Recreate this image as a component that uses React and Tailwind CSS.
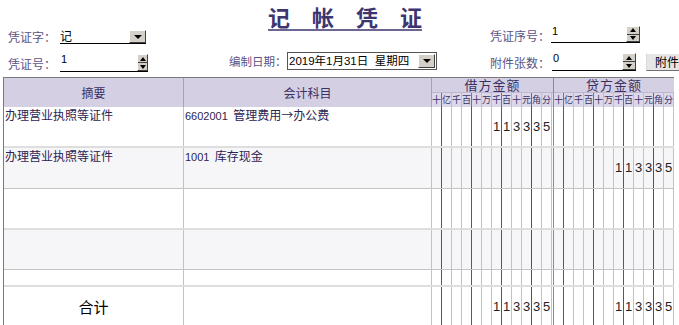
import React from 'react';

const UNITS = ['十', '亿', '千', '百', '十', '万', '千', '百', '十', '元', '角', '分'];

// colour of the line to the right of column i
const lineClass = (i) => {
  if (i === 0 || i === 3 || i === 6) return 'border-r-[#138a13]';
  if (i === 9) return 'border-r-[#f01010]';
  return 'border-r-[#c2c2c2]';
};

const headLineClass = (i) => {
  if (i === 0 || i === 3 || i === 6) return 'border-r-[#2f9a6a]';
  if (i === 9) return 'border-r-[#d04040]';
  return 'border-r-[#a9c3e0]';
};

const DownBtn = ({ className = '' }) => (
  <div
    className={`flex items-center justify-center bg-[#d4d0c8] border border-t-white border-l-white border-r-[#404040] border-b-[#404040] ${className}`}
  >
    <div className="w-0 h-0 border-l-[4px] border-r-[4px] border-t-[4px] border-l-transparent border-r-transparent border-t-black" />
  </div>
);

const Spinner = ({ className = '' }) => (
  <div
    className={`flex flex-col bg-[#d4d0c8] border border-t-white border-l-white border-r-[#404040] border-b-[#404040] ${className}`}
  >
    <div className="flex-1 flex items-center justify-center border-b border-[#404040]">
      <div className="w-0 h-0 border-l-[3px] border-r-[3px] border-b-[4px] border-l-transparent border-r-transparent border-b-black" />
    </div>
    <div className="flex-1 flex items-center justify-center">
      <div className="w-0 h-0 border-l-[3px] border-r-[3px] border-t-[4px] border-l-transparent border-r-transparent border-t-black" />
    </div>
  </div>
);

const Amount = ({ value = '' }) => {
  const cells = UNITS.map((_, i) => {
    const idx = i - (12 - value.length);
    return idx >= 0 ? value[idx] : '';
  });
  return (
    <div className="flex h-full">
      {cells.map((d, i) => (
        <div
          key={i}
          className={`w-[10px] h-full border-r flex items-center justify-center font-['Liberation_Sans',sans-serif] text-[13px] text-[#222] ${lineClass(i)}`}
        >
          {d}
        </div>
      ))}
    </div>
  );
};

const Row = ({ className, summary, subject, debit, credit, total }) => (
  <div className={`flex ${className}`}>
    <div
      className={`w-[180px] border-r border-[#c2c2c2] ${
        total
          ? 'flex items-center justify-center text-[15px] text-black'
          : 'pl-[1px] pt-[1px] text-[12px] leading-[14px] text-[#2b2452]'
      }`}
    >
      {summary}
    </div>
    <div className="w-[248px] border-r border-[#c2c2c2] pl-[1px] pt-[1px] text-[12px] leading-[14px] text-[#2b2452]">
      {subject}
    </div>
    <div className="w-[122px] border-r border-[#8c8c8c]">
      <Amount value={debit} />
    </div>
    <div className="w-[120px]">
      <Amount value={credit} />
    </div>
  </div>
);

export default function App() {
  return (
    <div className="w-[679px] h-[325px] overflow-hidden bg-white font-['Noto_Sans_CJK_SC',sans-serif] text-[12px]">
      {/* header form */}
      <div className="flex h-[77px]">
        {/* left column */}
        <div className="w-[229px] shrink-0 pl-[8px] pt-[29px]">
          <div className="flex items-center h-[15px]">
            <span className="w-[52px] shrink-0 whitespace-nowrap text-[#5b5385] leading-[15px]">凭证字：</span>
            <div className="w-[86px] h-[15px] shrink-0 border-b border-black flex justify-between">
              <span className="leading-[13px] text-black">记</span>
              <DownBtn className="w-[17px] h-[13px] self-end" />
            </div>
          </div>
          <div className="flex items-center h-[18px] mt-[10px]">
            <span className="w-[52px] shrink-0 whitespace-nowrap text-[#5b5385] leading-[15px]">凭证号：</span>
            <div className="w-[88px] h-[18px] shrink-0 border-b border-black flex justify-between">
              <span className="font-['Liberation_Sans',sans-serif] text-[11px] leading-[11px] text-black pl-[1px]">1</span>
              <Spinner className="w-[11px] h-[17px]" />
            </div>
          </div>
        </div>

        {/* center column */}
        <div className="w-[261px] shrink-0">
          <div className="h-[52px] pl-[39px] pt-[4px]">
            <div className="inline-flex gap-[22px] border-b-2 border-[#6e6692] text-[22px] leading-[25px] font-semibold text-[#3e3470]">
              <span>记</span>
              <span>帐</span>
              <span>凭</span>
              <span>证</span>
            </div>
          </div>
          <div className="flex items-center h-[18px]">
            <span className="w-[58px] shrink-0 whitespace-nowrap text-[11.5px] text-[#5b5385] leading-[15px]">编制日期：</span>
            <div className="w-[150px] h-[18px] shrink-0 border border-[#555] flex items-center justify-between pl-[1px] pr-[1px]">
              <span className="whitespace-nowrap font-['Liberation_Sans','Noto_Sans_CJK_SC',sans-serif] text-[11.5px] leading-[14px] text-black">
                2019年1月31日&nbsp;&nbsp;星期四
              </span>
              <DownBtn className="w-[17px] h-[14px] shrink-0" />
            </div>
          </div>
        </div>

        {/* right column */}
        <div className="w-[189px] shrink-0 pt-[26px]">
          <div className="flex items-center h-[17px]">
            <span className="w-[61px] shrink-0 whitespace-nowrap text-[#5b5385] leading-[15px] mt-[1px]">凭证序号：</span>
            <div className="w-[89px] h-[17px] shrink-0 border-b border-black flex justify-between">
              <span className="font-['Liberation_Sans',sans-serif] text-[11px] leading-[11px] text-black pl-[1px]">1</span>
              <Spinner className="w-[14px] h-[16px]" />
            </div>
          </div>
          <div className="flex items-center h-[18px] mt-[10px]">
            <span className="w-[62px] shrink-0 whitespace-nowrap text-[#5b5385] leading-[15px] mt-[1px]">附件张数：</span>
            <div className="w-[84px] h-[18px] shrink-0 border-b border-black flex justify-between">
              <span className="font-['Liberation_Sans',sans-serif] text-[11px] leading-[11px] text-black pl-[1px]">0</span>
              <Spinner className="w-[14px] h-[17px]" />
            </div>
            <button className="ml-[10px] w-[45px] h-[18px] shrink-0 bg-[#e6e6e6] border border-t-white border-l-[#d8d8d8] border-r-[#707070] border-b-[#707070] text-[12px] leading-[14px] text-black text-left pl-[8px]">
              附件
            </button>
          </div>
        </div>
      </div>

      {/* voucher table */}
      <div className="ml-[3px] w-[671px] border-l border-t border-[#7a7a7a]">
        {/* table header */}
        <div className="flex h-[29px] bg-[#d5cfe3] text-[#3a3163]">
          <div className="w-[180px] border-r border-[#a7a1bb] flex items-center justify-center text-[12px]">摘要</div>
          <div className="w-[248px] border-r border-[#a7a1bb] flex items-center justify-center text-[12px]">会计科目</div>
          {['借方金额', '贷方金额'].map((t, k) => (
            <div
              key={t}
              className={k === 0 ? 'w-[122px] border-r border-[#8c8c8c] flex flex-col' : 'w-[120px] flex flex-col'}
            >
              <div className="h-[15px] border-b border-[#bdb7d0] flex items-center justify-center text-[13px] leading-[14px] tracking-[1px]">
                {t}
              </div>
              <div className="h-[14px] flex bg-[#dcd8e9]">
                {UNITS.map((u, i) => (
                  <div
                    key={i}
                    className={`w-[10px] border-r flex items-center justify-center text-[9px] leading-[12px] overflow-hidden ${headLineClass(i)}`}
                  >
                    {u}
                  </div>
                ))}
              </div>
            </div>
          ))}
        </div>

        {/* body rows */}
        <Row
          className="h-[41px] bg-white border-b-2 border-[#dedede]"
          summary="办理营业执照等证件"
          subject={
            <>
              <span className="font-['Liberation_Sans',sans-serif] text-[11px]">6602001</span>&nbsp;&nbsp;管理费用→办公费
            </>
          }
          debit="113335"
          credit=""
        />
        <Row
          className="h-[41px] bg-[#f6f6f9] border-b border-[#c4c4c4]"
          summary="办理营业执照等证件"
          subject={
            <>
              <span className="font-['Liberation_Sans',sans-serif] text-[11px]">1001</span>&nbsp;&nbsp;库存现金
            </>
          }
          debit=""
          credit="113335"
        />
        <Row className="h-[41px] bg-white border-b-2 border-[#dedede]" debit="" credit="" />
        <Row className="h-[40px] bg-[#f6f6f9] border-b border-[#c4c4c4]" debit="" credit="" />
        <Row className="h-[17px] bg-white border-b-2 border-[#dedede]" debit="" credit="" />
        <Row className="h-[40px] bg-white" summary="合计" total debit="113335" credit="113335" />
      </div>
    </div>
  );
}
